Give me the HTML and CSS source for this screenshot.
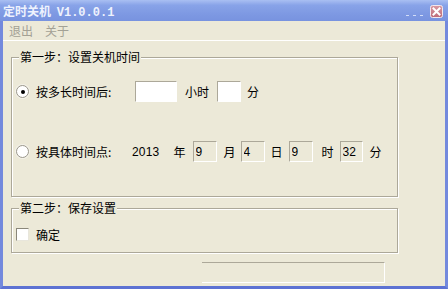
FILE: index.html
```html
<!DOCTYPE html>
<html lang="zh-CN">
<head>
    <meta charset="UTF-8">
    <title>定时关机 V1.0.0.1</title>
    <link rel="stylesheet" href="styles.css">
</head>
<body>
    <div class="window">
        <div class="titlebar">
            <span class="title">定时关机 <span class="ver">V1.0.0.1</span></span>
            <span class="dots"><i></i><i></i><i></i></span>
            <svg class="close" width="13" height="13" viewBox="0 0 13 13">
                <defs>
                    <linearGradient id="cg" x1="0" y1="0" x2="0" y2="1">
                        <stop offset="0" stop-color="#d99aa3"/>
                        <stop offset="1" stop-color="#bd6b78"/>
                    </linearGradient>
                </defs>
                <rect x="0.5" y="0.5" width="12" height="12" rx="2" fill="url(#cg)" stroke="#f2e8ee"/>
                <path d="M3.5 3.5 L9.5 9.5 M9.5 3.5 L3.5 9.5" stroke="#fff" stroke-width="2" stroke-linecap="square"/>
            </svg>
        </div>
        <div class="frame">
            <div class="menubar">
                <span class="menu-item">退出</span>
                <span class="menu-item">关于</span>
            </div>
            <div class="content">
                <div class="group group-one">
                    <div class="group-title">第一步：设置关机时间</div>
                    <div class="row row-first">
                        <span class="radio checked"></span>
                        <span class="label label-after">按多长时间后:</span>
                        <input class="box box-wide" type="text" value="">
                        <span class="unit unit-hour">小时</span>
                        <input class="box box-small" type="text" value="">
                        <span class="unit unit-min">分</span>
                    </div>
                    <div class="row row-second">
                        <span class="radio"></span>
                        <span class="label label-at">按具体时间点:</span>
                        <span class="year">2013</span>
                        <span class="unit u-year">年</span>
                        <input class="box box-ro b-month" type="text" value="9" readonly>
                        <span class="unit u-month">月</span>
                        <input class="box box-ro b-day" type="text" value="4" readonly>
                        <span class="unit u-day">日</span>
                        <input class="box box-ro b-hour" type="text" value="9" readonly>
                        <span class="unit u-hour">时</span>
                        <input class="box box-ro b-min" type="text" value="32" readonly>
                        <span class="unit u-min">分</span>
                    </div>
                </div>
                <div class="group group-two">
                    <div class="group-title">第二步：保存设置</div>
                    <div class="row row-check">
                        <span class="checkbox"></span>
                        <span class="label">确定</span>
                    </div>
                </div>
                <div class="status"></div>
            </div>
        </div>
    </div>
</body>
</html>
```

FILE: styles.css
```css
body {
    margin: 0;
    padding: 0;
    background-color: #ece9d8;
    font-family: "Liberation Sans", "Noto Sans CJK SC", sans-serif;
    font-size: 12px;
    color: #000;
}

.window {
    width: 448px;
    height: 289px;
    display: flex;
    flex-direction: column;
    overflow: hidden;
}

.titlebar {
    height: 21px;
    display: flex;
    align-items: center;
    padding: 0 5px 0 3px;
    background: linear-gradient(#a9bff2, #88a3e8 25%, #7d98e2 70%, #7893df);
    flex-shrink: 0;
}

.title {
    color: #eef2fd;
    font-family: "Noto Sans CJK SC", sans-serif;
    font-weight: bold;
    font-size: 12px;
    line-height: 14px;
    margin-top: 2px;
}

.ver {
    font-family: "Liberation Mono", monospace;
    font-weight: bold;
    font-size: 12px;
    margin-left: 3px;
}

.dots {
    margin-left: auto;
    display: flex;
    gap: 4px;
    align-self: flex-end;
    margin-bottom: 5px;
}

.dots i {
    display: block;
    width: 3px;
    height: 1px;
    background-color: #d2ddf8;
}

.close {
    display: block;
    margin-left: 7px;
    margin-top: 1px;
}

.frame {
    flex: 1;
    min-height: 0;
    overflow: hidden;
    display: flex;
    flex-direction: column;
    border: 3px solid #7389dd;
    border-top: 0;
    border-bottom-color: #5d72d3;
}

.menubar {
    height: 19px;
    flex-shrink: 0;
    display: flex;
    align-items: center;
    padding-left: 6px;
    gap: 12px;
    border-bottom: 1px solid #fff;
    font-family: "Noto Sans CJK SC", sans-serif;
}

.menu-item {
    color: #a3a195;
    line-height: 14px;
}

.content {
    padding: 16px 0 0 8px;
}

.group {
    width: 385px;
    border: 1px solid #aca899;
    box-shadow: 1px 1px 0 #fff, inset 1px 1px 0 #fff;
}

.group-title {
    width: max-content;
    margin: -8px 0 0 7px;
    padding: 0 1px;
    background-color: #ece9d8;
    line-height: 14px;
    height: 14px;
    font-family: "Noto Sans CJK SC", sans-serif;
}

.group-one {
    padding-bottom: 34px;
}

.group-two {
    margin-top: 11px;
    padding-bottom: 7px;
}

.row {
    display: flex;
    align-items: center;
    height: 21px;
    padding-left: 4px;
}

.row-first {
    margin-top: 17px;
}

.row-second {
    margin-top: 39px;
}

.row-check {
    margin-top: 9px;
}

.label {
    font-family: "Noto Sans CJK SC", sans-serif;
    margin-left: 7px;
}

.label-after {
    width: 99px;
}

.label-at {
    width: 96px;
}

.unit {
    font-family: "Noto Sans CJK SC", sans-serif;
}

.radio {
    width: 11px;
    height: 11px;
    border: 1px solid #9a978a;
    border-radius: 50%;
    background-color: #fff;
    box-shadow: 0 0 0 1px #f4f2ea;
    display: flex;
    align-items: center;
    justify-content: center;
}

.radio.checked::after {
    content: "";
    width: 4px;
    height: 4px;
    border-radius: 50%;
    background-color: #000;
}

.checkbox {
    width: 11px;
    height: 11px;
    background-color: #fff;
    border: 1px solid;
    border-color: #8a877a #e8e6dc #e8e6dc #8a877a;
}

.box {
    box-sizing: border-box;
    height: 21px;
    margin: 0;
    padding: 1px 2px 0;
    font-family: "Liberation Sans", sans-serif;
    font-size: 12px;
    color: #000;
    background-color: #fff;
    border: 1px solid;
    border-color: #aca899 #fff #fff #aca899;
    outline: none;
}

.box-wide {
    width: 42px;
}

.box-small {
    width: 24px;
}

.unit-hour {
    margin: 0 8px;
}

.unit-min {
    margin-left: 6px;
}

.year {
    letter-spacing: 0.2px;
}

.box-ro {
    width: 24px;
    background-color: #ece9d8;
}

.u-year {
    margin: 0 7px 0 14px;
}

.u-month {
    margin: 0 5px 0 7px;
}

.u-day {
    margin: 0 6px 0 6px;
}

.u-hour {
    margin: 0 6px 0 9px;
}

.b-min {
    width: 23px;
}

.u-min {
    margin-left: 7px;
}

.status {
    width: 182px;
    height: 19px;
    margin: 9px 0 0 191px;
    border-top: 1px solid #aca899;
    border-right: 1px solid #fff;
    border-bottom: 1px solid #fff;
}
```
